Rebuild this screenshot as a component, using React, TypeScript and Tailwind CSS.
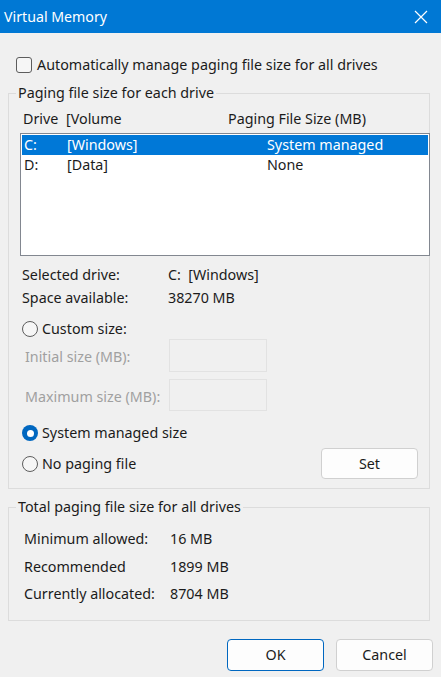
import React from "react";

const font = { fontFamily: '"Noto Sans", "Segoe UI", sans-serif' };

function Radio({ checked }: { checked?: boolean }) {
  return checked ? (
    <span className="flex h-[16px] w-[16px] shrink-0 items-center justify-center rounded-full bg-[#0067c0]">
      <span className="h-[7px] w-[7px] rounded-full bg-white" />
    </span>
  ) : (
    <span className="h-[16px] w-[16px] shrink-0 rounded-full border border-[#5d5d5d] bg-[#f6f6f6]" />
  );
}

export default function App() {
  return (
    <div className="flex h-[677px] w-[441px] flex-col overflow-hidden bg-[#f0f0f0] text-[14.3px] text-[#1b1b1b]" style={font}>
      {/* Title bar */}
      <div className="flex h-[33px] shrink-0 items-center justify-between bg-[#0078d4] pl-[4px] pr-[12px] text-white">
        <span className="text-[14.2px] leading-[20px]">Virtual Memory</span>
        <svg width="16" height="16" viewBox="0 0 16 16">
          <path d="M2 2 L14 14 M14 2 L2 14" stroke="white" strokeWidth="1.2" fill="none" />
        </svg>
      </div>

      <div className="flex flex-1 flex-col">
        {/* auto manage checkbox */}
        <div className="mt-[24px] flex h-[16px] items-center pl-[16px]">
          <span className="h-[16px] w-[16px] shrink-0 rounded-[3px] border border-[#5d5d5d] bg-[#f6f6f6]" />
          <span className="ml-[5px] leading-[20px]">Automatically manage paging file size for all drives</span>
        </div>

        {/* Group 1 */}
        <fieldset className="ml-[8px] mt-[12px] w-[422px] border border-[#dcdcdc] pb-[9px] pl-[11px] pr-0">
          <legend className="ml-[-4px] px-[2px] leading-[16px]">Paging file size for each drive</legend>
          <div className="mt-[8px] flex h-[20px] items-center pl-[3px] leading-[20px]">
            <span className="w-[43px]">Drive</span>
            <span className="w-[162px]">[Volume</span>
            <span>Paging File Size (MB)</span>
          </div>
          <div className="mr-[-1px] mt-[4px] h-[123px] border border-[#828790] bg-white p-[1px]">
            <div className="flex h-[20px] items-center bg-[#0078d7] pl-[2px] leading-[20px] text-white">
              <span className="w-[43px]">C:</span>
              <span className="w-[200px]">[Windows]</span>
              <span>System managed</span>
            </div>
            <div className="flex h-[20px] items-center pl-[2px] leading-[20px]">
              <span className="w-[43px]">D:</span>
              <span className="w-[200px]">[Data]</span>
              <span>None</span>
            </div>
          </div>

          <div className="mt-[9px] flex h-[20px] items-center pl-[2px] leading-[20px]">
            <span className="w-[146px]">Selected drive:</span>
            <span>C:&nbsp; [Windows]</span>
          </div>
          <div className="mt-[3px] flex h-[20px] items-center pl-[2px] leading-[20px]">
            <span className="w-[146px]">Space available:</span>
            <span>38270 MB</span>
          </div>

          <div className="mt-[11px] flex h-[20px] items-center pl-[2px] leading-[20px]">
            <Radio />
            <span className="ml-[4px]">Custom size:</span>
          </div>
          <div className="flex h-[33px] items-center pl-[5px] text-[#a0a0a0]">
            <span className="w-[144px] pt-[3px]">Initial size (MB):</span>
            <span className="h-[33px] w-[98px] border border-[#e2e2e2]" />
          </div>
          <div className="mt-[7px] flex h-[32px] items-center pl-[5px] text-[#a0a0a0]">
            <span className="w-[144px] pt-[4px]">Maximum size (MB):</span>
            <span className="h-[32px] w-[98px] border border-[#e2e2e2]" />
          </div>

          <div className="mt-[12px] flex h-[20px] items-center pl-[2px] leading-[20px]">
            <Radio checked />
            <span className="ml-[4px]">System managed size</span>
          </div>
          <div className="mt-[5px] flex h-[31px] items-center justify-between pl-[2px] pr-[11px] leading-[20px]">
            <div className="flex items-center">
              <Radio />
              <span className="ml-[4px]">No paging file</span>
            </div>
            <button className="h-[31px] w-[97px] rounded-[4px] border border-[#d0d0d0] bg-[#fdfdfd] text-[14.3px]" style={font}>
              Set
            </button>
          </div>
        </fieldset>

        {/* Group 2 */}
        <fieldset className="ml-[8px] mt-[10px] h-[122px] w-[422px] border border-[#dcdcdc] pl-[15px]">
          <legend className="ml-[-8px] px-[2px] leading-[16px]">Total paging file size for all drives</legend>
          <div className="mt-[14px] flex h-[20px] items-center leading-[20px]">
            <span className="w-[146px]">Minimum allowed:</span>
            <span>16 MB</span>
          </div>
          <div className="mt-[8px] flex h-[20px] items-center leading-[20px]">
            <span className="w-[146px]">Recommended</span>
            <span>1899 MB</span>
          </div>
          <div className="mt-[7px] flex h-[20px] items-center leading-[20px]">
            <span className="w-[146px]">Currently allocated:</span>
            <span>8704 MB</span>
          </div>
        </fieldset>

        <div className="mt-[18px] flex justify-end gap-[12px] pr-[8px]">
          <button className="h-[32px] w-[97px] rounded-[4px] border border-[#0067c0] bg-[#fdfdfd] text-[14.3px]" style={font}>
            OK
          </button>
          <button className="h-[32px] w-[97px] rounded-[4px] border border-[#d0d0d0] bg-[#fdfdfd] text-[14.3px]" style={font}>
            Cancel
          </button>
        </div>
      </div>
    </div>
  );
}
